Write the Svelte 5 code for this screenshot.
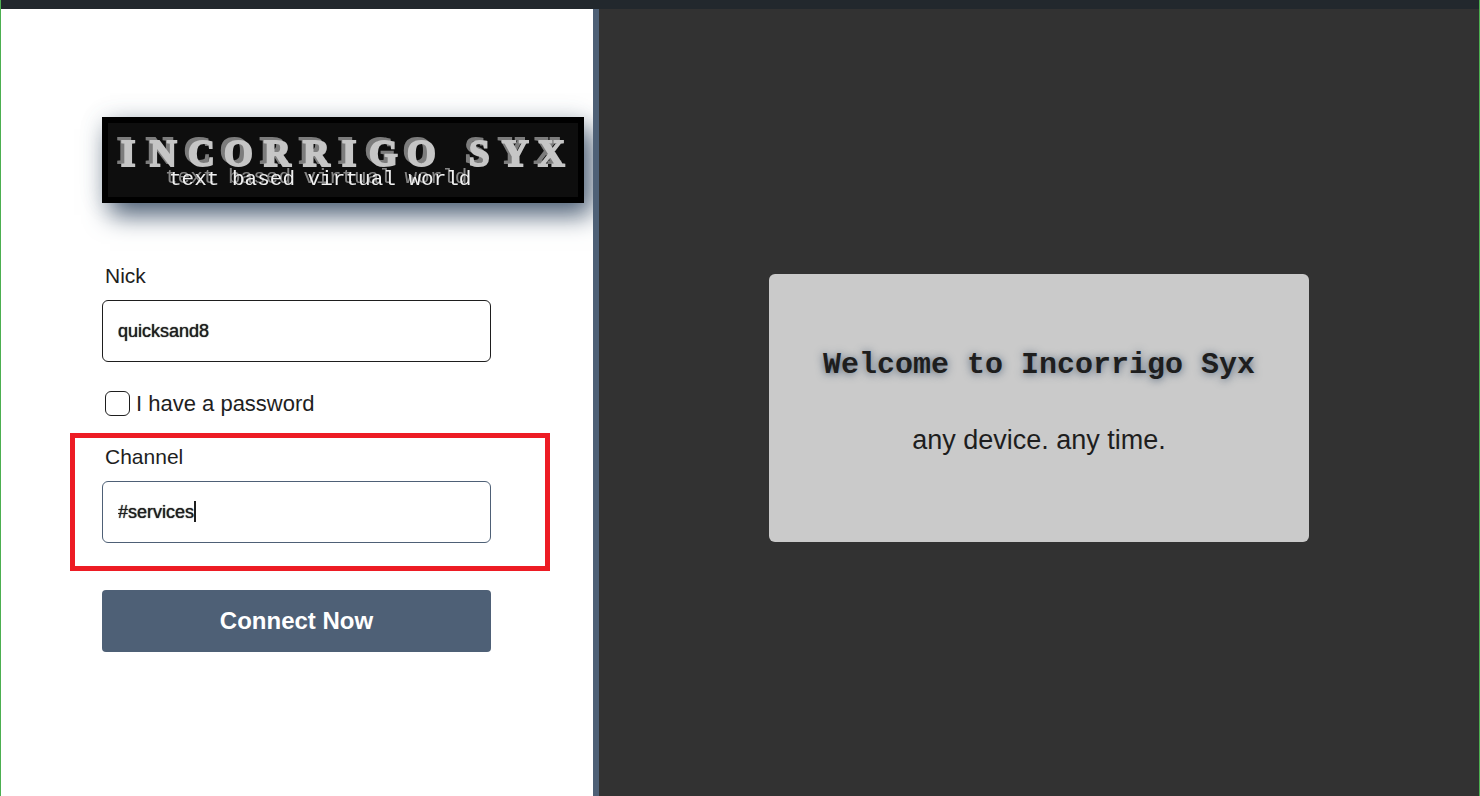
<script lang="ts">
  let nick = 'quicksand8';
  let channel = '#services';
  let hasPassword = false;

  const logoTitle = 'INCORRIGOSYX';
  // One x position for each letter of the title
  const logoLetters = [13, 42, 80, 116, 156, 195, 234, 261, 299, 361, 394, 430];
  const logoTagline = 'text based virtual world';
</script>

<div class="app">
  <div class="topbar"></div>

  <main class="startup">
    <section class="startup-left">
      <form class="connect-form" onsubmit={(e) => e.preventDefault()}>
        <svg class="logo" viewBox="0 0 470 74" role="img" aria-label="Incorrigo Syx">
          <rect width="470" height="74" fill="#0e0e0e" />
          <text class="logo-title" x={logoLetters.join(' ')} y="43">{logoTitle}</text>
          <text class="logo-tagline" x="61" y="62">{logoTagline}</text>
        </svg>

        <div class="field">
          <label for="nick">Nick</label>
          <input id="nick" type="text" bind:value={nick} />
        </div>

        <label class="password-toggle">
          <input type="checkbox" bind:checked={hasPassword} />
          <span>I have a password</span>
        </label>

        <div class="field">
          <label for="channel">Channel</label>
          <div class="input-wrap">
            <input id="channel" class="active" type="text" bind:value={channel} />
            <span class="caret"></span>
          </div>
          <div class="highlight"></div>
        </div>

        <button type="submit">Connect Now</button>
      </form>
    </section>

    <section class="startup-right">
      <div class="info">
        <h1>Welcome to Incorrigo Syx</h1>
        <p>any device. any time.</p>
      </div>
    </section>
  </main>
</div>

<style>
  .app {
    min-height: 100vh;
    box-sizing: border-box;
    display: flex;
    flex-direction: column;
    border: solid #4caf50;
    border-width: 0 1px;
    font-family: 'Liberation Sans', Arial, sans-serif;
    color: #1e1e1e;
  }

  .topbar {
    height: 9px;
    background: #22282d;
  }

  .startup {
    flex: 1;
    display: flex;
  }

  .startup-left {
    flex: 0 0 598px;
    box-sizing: border-box;
    display: flex;
    flex-direction: column;
    justify-content: center;
    padding: 0 102px 36px 101px;
    border-right: 6px solid #4e6076;
    background: #fff;
    overflow: hidden;
  }

  .connect-form {
    display: flex;
    flex-direction: column;
  }

  .logo {
    width: 470px;
    height: 74px;
    margin-bottom: 61px;
    border: 6px solid #000;
    box-shadow: 8px 12px 24px #4e6076, 0 0 24px rgba(78, 96, 118, 0.12);
  }

  .logo-title {
    font-family: 'Liberation Serif', 'Times New Roman', serif;
    font-size: 37px;
    font-weight: bold;
    fill: #c6c6c6;
    stroke: #c6c6c6;
    stroke-width: 2px;
    filter: drop-shadow(-4px -3px 0 #7c7c7c);
  }

  .logo-tagline {
    font-family: 'Liberation Mono', 'Courier New', monospace;
    font-size: 21px;
    fill: #f0f0f0;
    filter: drop-shadow(-4px -2px 0 #858585);
  }

  .field {
    position: relative;
    display: flex;
    flex-direction: column;
    gap: 12px;
  }

  .field label {
    padding-left: 3px;
    font-size: 21px;
    line-height: 24px;
  }

  input[type='text'] {
    width: 100%;
    height: 62px;
    box-sizing: border-box;
    padding: 0 15px;
    border: 1px solid #1e1e1e;
    border-radius: 6px;
    outline: none;
    background: #fff;
    color: inherit;
    font-family: inherit;
    font-size: 18px;
    text-shadow: 0 0 1px #1e1e1e;
  }

  input[type='text'].active {
    border-color: #4e6076;
    caret-color: transparent;
  }

  .input-wrap {
    position: relative;
  }

  .caret {
    position: absolute;
    top: 20px;
    left: 92px;
    width: 2px;
    height: 21px;
    background: #1e1e1e;
  }

  .password-toggle {
    display: flex;
    align-items: center;
    gap: 6px;
    margin: 29px 0;
    padding-left: 3px;
    font-size: 22px;
    line-height: 24px;
  }

  .password-toggle input {
    appearance: none;
    width: 25px;
    height: 25px;
    margin: 0;
    border: 1px solid #1e1e1e;
    border-radius: 6px;
    background: #fff;
  }

  .password-toggle input:checked {
    background: #4e6076;
  }

  .highlight {
    position: absolute;
    inset: -12px -59px -28px -32px;
    border: 5px solid #ed1c24;
    pointer-events: none;
  }

  button {
    height: 62px;
    margin-top: 47px;
    border: none;
    border-radius: 4px;
    background: #4e6076;
    color: #fff;
    font-family: inherit;
    font-size: 24px;
    font-weight: bold;
    cursor: pointer;
  }

  .startup-right {
    flex: 1;
    display: flex;
    align-items: center;
    justify-content: center;
    padding-top: 11px;
    background: #323232;
  }

  .info {
    width: 540px;
    box-sizing: border-box;
    padding: 73px 24px 86px;
    border-radius: 6px;
    background: #cacaca;
    text-align: center;
  }

  .info h1 {
    margin: 0 0 41px;
    font-family: 'Liberation Mono', 'Courier New', monospace;
    font-size: 30px;
    line-height: 36px;
    text-shadow: 0 1px 8px #4e6076;
  }

  .info p {
    margin: 0;
    font-size: 27px;
    line-height: 32px;
  }
</style>
